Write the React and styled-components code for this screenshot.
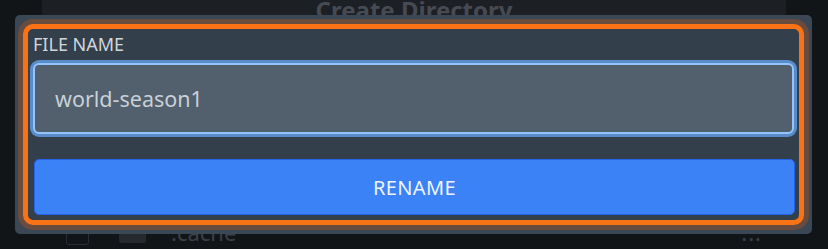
import React, { useState } from "react"
import styled, { createGlobalStyle } from "styled-components"

const GlobalStyle = createGlobalStyle`
  html, body {
    margin: 0;
    padding: 0;
    background: #121518;
    font-family: "Noto Sans", "Open Sans", sans-serif;
    overflow: hidden;
  }
  * {
    box-sizing: border-box;
  }
`;

const Page = styled.div`
  width: 828px;
  height: 249px;
  position: relative;
  overflow: hidden;
`;

const Dialog = styled.div`
  margin-left: 42px;
  width: 744px;
  display: flex;
  flex-direction: column;
`;

const DialogHeader = styled.div`
  height: 60px;
  background: #1c1f24;
  display: flex;
  justify-content: center;
  padding-top: 1px;
`;

const DialogTitle = styled.h2`
  margin: 0;
  font-size: 24px;
  line-height: 18px;
  font-weight: 700;
  color: #464b53;
`;

const FileList = styled.div`
  padding-top: 154px;
`;

const FileRow = styled.div`
  height: 36px;
  display: flex;
  align-items: center;
  padding: 0 24px;
  gap: 30px;
`;

const Checkbox = styled.span`
  width: 23px;
  height: 22px;
  margin-top: 4px;
  border: 1px solid #2a2e34;
  border-radius: 3px;
`;

const FolderIcon = styled.span`
  width: 27px;
  height: 24px;
  margin-top: -2px;
  background: #26292e;
  border-radius: 3px;
`;

const FileLabel = styled.span`
  flex: 1;
  margin-left: -5px;
  font-size: 22px;
  color: #3b4047;
`;

const Dots = styled.span`
  font-size: 22px;
  color: #3b4047;
  letter-spacing: 1px;
`;

const Overlay = styled.div`
  position: absolute;
  inset: 0;
  display: flex;
  padding: 15px 16px 15px 15px;
`;

const Panel = styled.div`
  flex: 1;
  background: #3b4754;
  border-radius: 5px;
  padding: 9px 8px;
`;

const Form = styled.form`
  display: flex;
  flex-direction: column;
  background: #333f4b;
  border: 5px solid #f97316;
  border-radius: 10px;
  box-shadow: 0 0 0 5px #6a4c3e;
  padding: 4px 5px 5px 5px;
`;

const Label = styled.label`
  font-size: 18px;
  line-height: 22px;
  color: #d1d5db;
  text-transform: uppercase;
`;

const Input = styled.input`
  margin-top: 8px;
  height: 71px;
  width: 100%;
  background: #525f6c;
  border: 2px solid #93c5fd;
  border-radius: 6px;
  box-shadow: 0 0 0 3px #5a8cc9;
  padding: 0 20px;
  font-family: "Noto Sans", "Open Sans", sans-serif;
  font-size: 21.5px;
  color: #c8d0d8;
  outline: none;
`;

const Button = styled.button`
  margin-top: 25px;
  margin-left: 1px;
  height: 56px;
  width: 100%;
  background: #3b82f6;
  border: 1px solid #2563eb;
  border-radius: 5px;
  font-family: "Noto Sans", "Open Sans", sans-serif;
  font-size: 20px;
  letter-spacing: 0.4px;
  color: #eef3ff;
  text-transform: uppercase;
  cursor: pointer;
`;

const App = () => {
  const [name, setName] = useState("world-season1");

  return (
    <Page>
      <GlobalStyle/>
      <Dialog>
        <DialogHeader>
          <DialogTitle>Create Directory</DialogTitle>
        </DialogHeader>
        <FileList>
          <FileRow>
            <Checkbox/>
            <FolderIcon/>
            <FileLabel>.cache</FileLabel>
            <Dots>...</Dots>
          </FileRow>
        </FileList>
      </Dialog>
      <Overlay>
        <Panel>
          <Form onSubmit={e => e.preventDefault()}>
            <Label htmlFor="file-name">File Name</Label>
            <Input id="file-name" value={name} onChange={e => setName(e.target.value)}/>
            <Button type="submit">Rename</Button>
          </Form>
        </Panel>
      </Overlay>
    </Page>
  );
}

export default App;
